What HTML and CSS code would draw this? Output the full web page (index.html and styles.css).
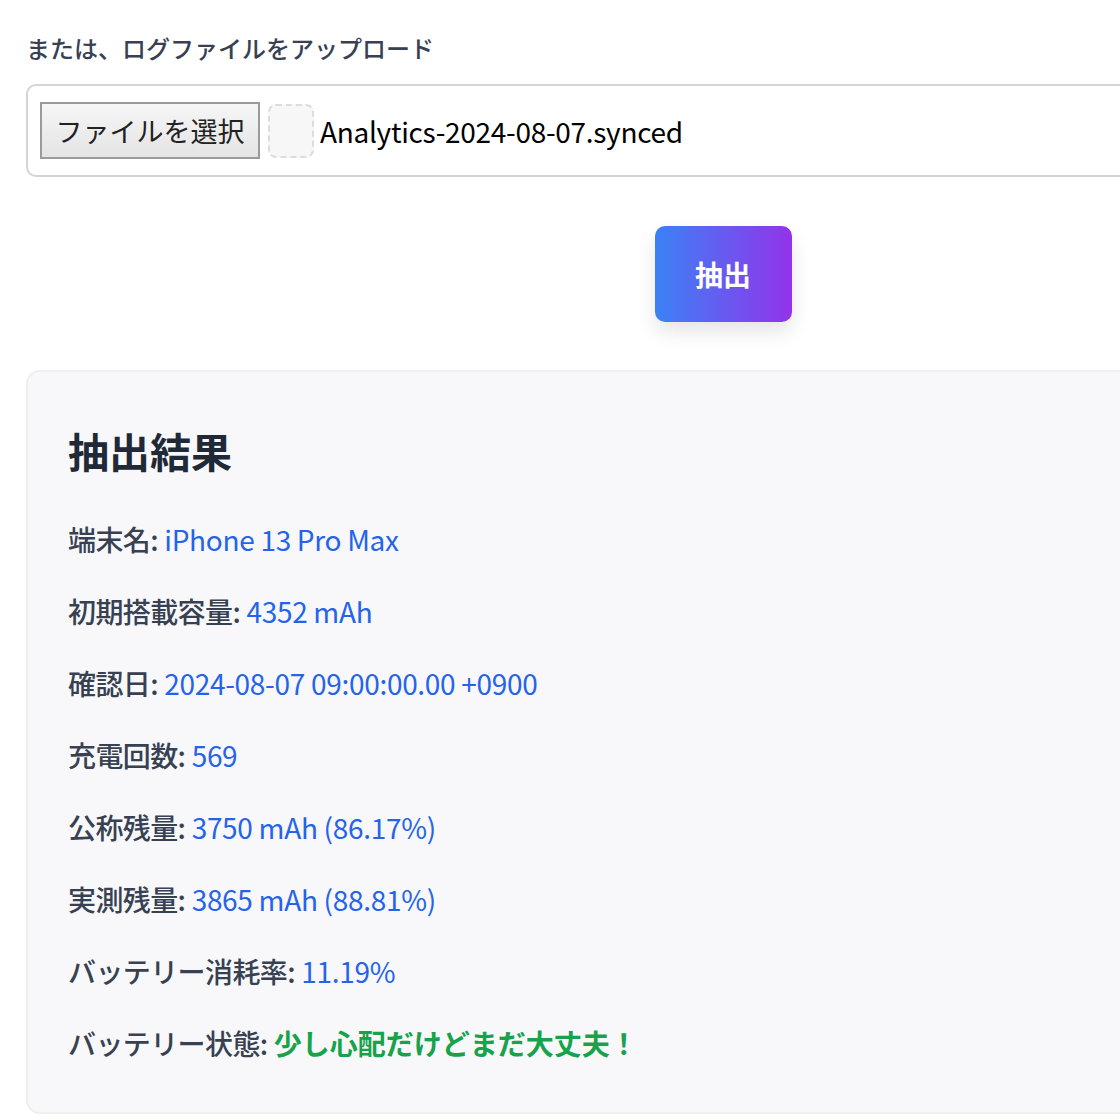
FILE: index.html
```html
<!DOCTYPE html>
<html>
<head>
<link rel="stylesheet" href="styles.css">
</head>
<body>

<div class="wrap">
  <div class="upload-label">または、ログファイルをアップロード</div>
  <div class="file-box">
    <span class="file-btn">ファイルを選択</span>
    <span class="file-thumb"></span>
    <span class="file-name">Analytics-2024-08-07.synced</span>
  </div>

  <div class="actions">
    <button class="extract-btn">抽出</button>
  </div>

  <div class="result">
    <h2>抽出結果</h2>
    <p><span class="key">端末名:</span> <span class="val">iPhone 13 Pro Max</span></p>
    <p><span class="key">初期搭載容量:</span> <span class="val">4352 mAh</span></p>
    <p><span class="key">確認日:</span> <span class="val">2024-08-07 09:00:00.00 +0900</span></p>
    <p><span class="key">充電回数:</span> <span class="val">569</span></p>
    <p><span class="key">公称残量:</span> <span class="val">3750 mAh (86.17%)</span></p>
    <p><span class="key">実測残量:</span> <span class="val">3865 mAh (88.81%)</span></p>
    <p><span class="key">バッテリー消耗率:</span> <span class="val">11.19%</span></p>
    <p><span class="key">バッテリー状態:</span> <span class="val good">少し心配だけどまだ大丈夫！</span></p>
  </div>
</div>

</body>
</html>
```

FILE: styles.css
```css
html, body {
  overflow: hidden;
}

body {
  margin: 0;
  background: #ffffff;
  font-family: "Noto Sans CJK JP", "Noto Sans", sans-serif;
}

.wrap {
  width: 1394px;
  padding: 31px 26px;
}

.upload-label {
  font-size: 24px;
  line-height: 34px;
  font-weight: 500;
  color: #374151;
  margin-bottom: 19px;
}

.file-box {
  display: flex;
  align-items: center;
  height: 89px;
  padding: 0 12px;
  border: 2px solid #d4d4d8;
  border-radius: 10px;
}

.file-btn {
  display: inline-block;
  width: 216px;
  height: 53px;
  line-height: 53px;
  text-align: center;
  font-size: 27px;
  color: #222;
  border: 2px solid #9a9a9a;
  background: linear-gradient(#f6f6f6, #ececec 55%, #e4e4e4);
}

.file-thumb {
  display: inline-block;
  width: 42px;
  height: 50px;
  margin-left: 8px;
  border: 2px dashed #dcdcdc;
  border-radius: 8px;
  background: #f7f7f7;
}

.file-name {
  margin-left: 6px;
  font-size: 28px;
  letter-spacing: -0.3px;
  color: #000;
}

.actions {
  display: flex;
  justify-content: center;
  padding: 49px 0 48px;
}

.extract-btn {
  width: 137px;
  height: 96px;
  border: none;
  border-radius: 10px;
  background: linear-gradient(90deg, #3b82f6, #9333ea);
  color: #fff;
  font-family: inherit;
  font-size: 28px;
  font-weight: 700;
  box-shadow: 0 10px 20px rgba(0, 0, 0, 0.1);
  cursor: pointer;
}

.result {
  height: 672px;
  padding: 34px 40px;
  background: #f8f8fa;
  border: 2px solid #efeff1;
  border-radius: 14px;
}

.result h2 {
  margin: 16px 0 40px;
  font-size: 41px;
  line-height: 56px;
  font-weight: 700;
  color: #1f2937;
}

.result p {
  margin: 0 0 30px;
  font-size: 28px;
  line-height: 42px;
}

.key {
  font-weight: 500;
  color: #374151;
  letter-spacing: -0.6px;
}

.val {
  color: #2563eb;
  letter-spacing: -0.3px;
}

.val.good {
  color: #16a34a;
  font-weight: 700;
  letter-spacing: 0;
}
```
